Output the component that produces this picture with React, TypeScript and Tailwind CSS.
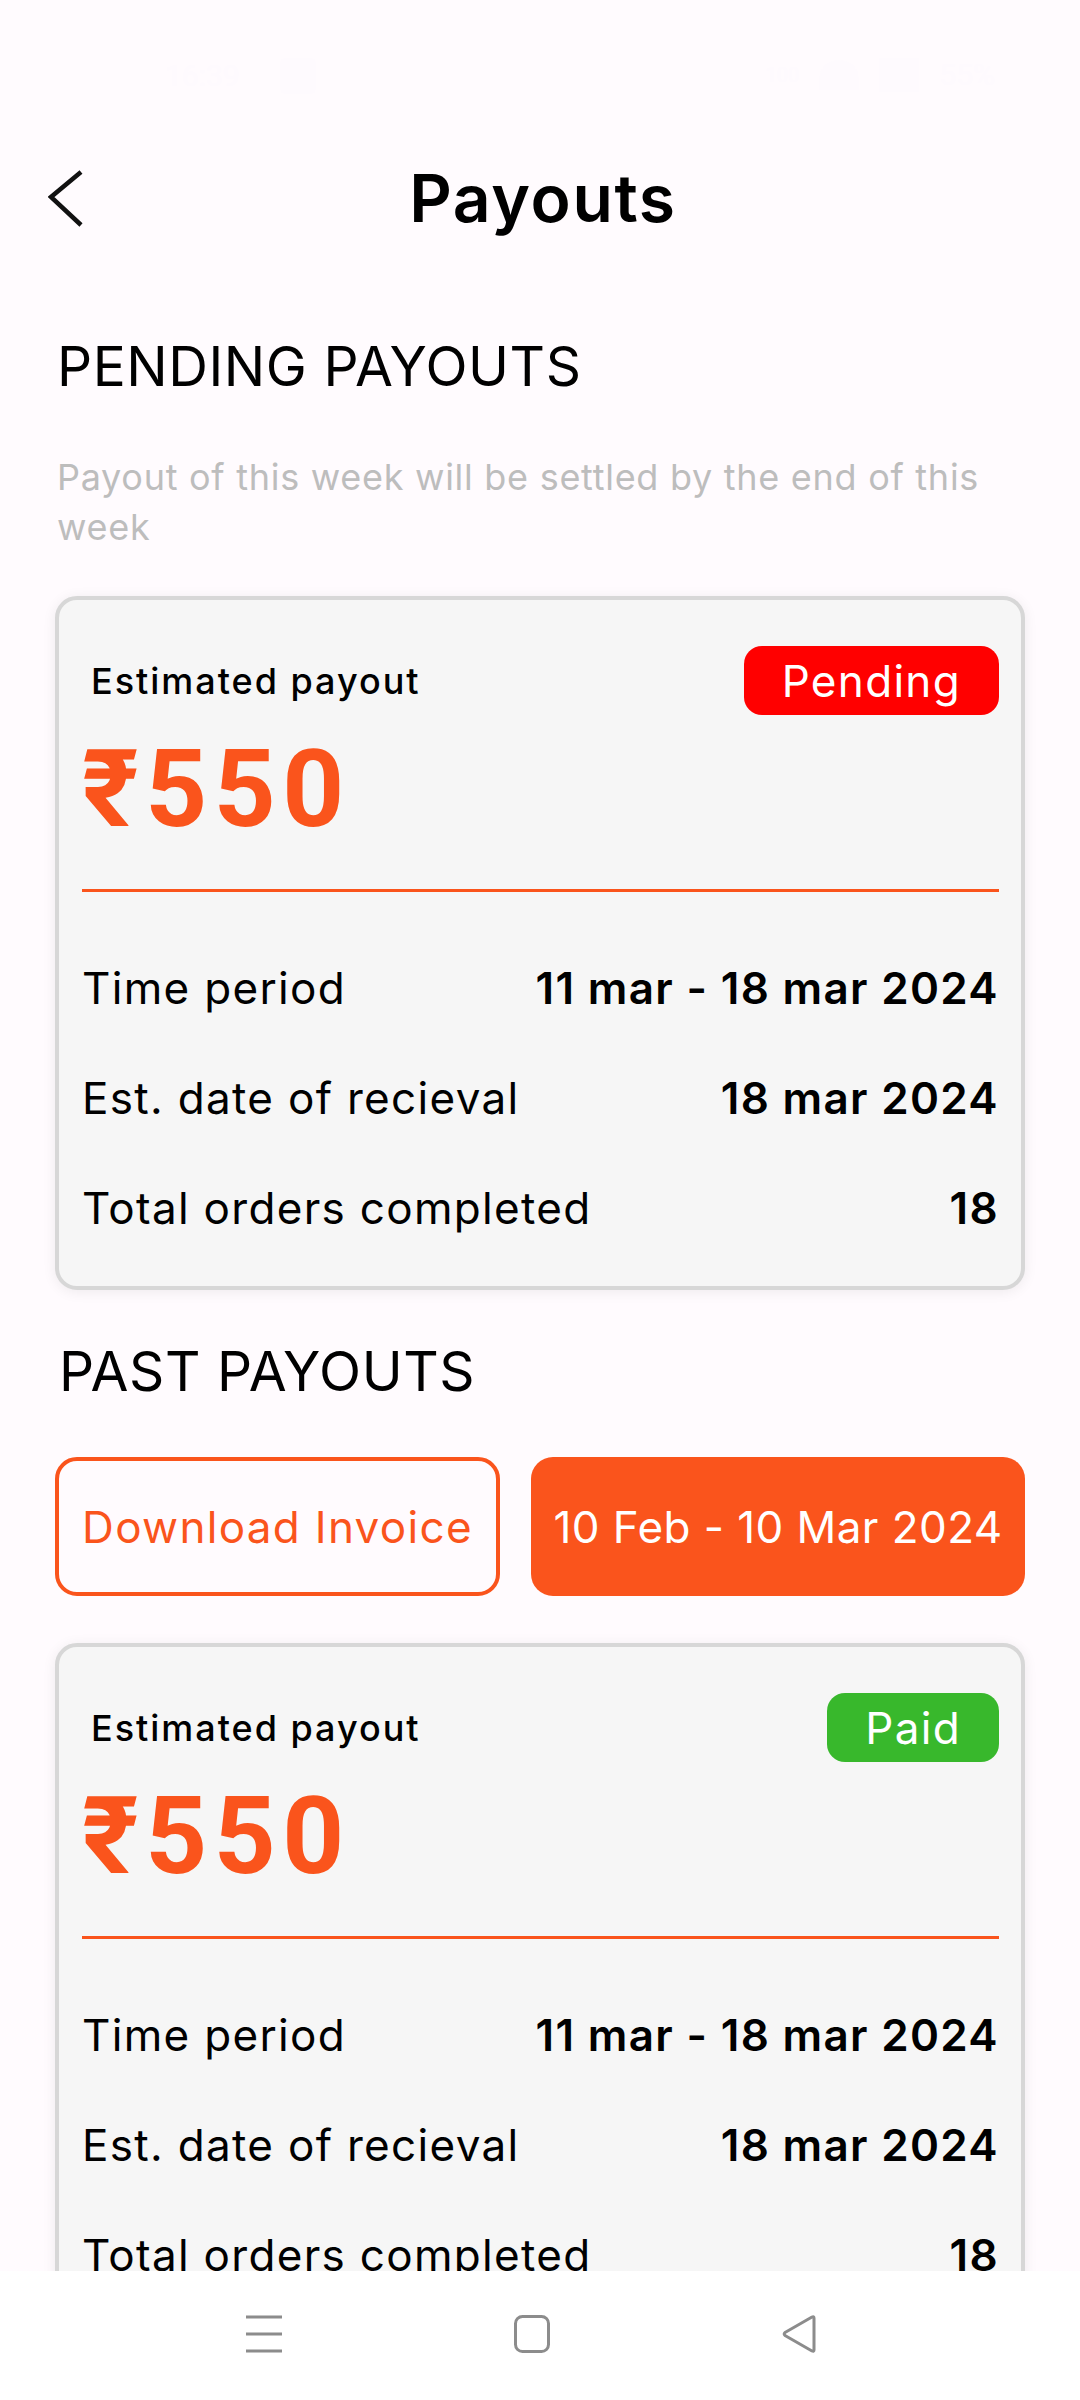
import React from 'react';

const ORANGE = '#fa541c';

type Payout = {
  status: 'Pending' | 'Paid';
  amount: string;
  period: string;
  receival: string;
  orders: string;
};

const pending: Payout = {
  status: 'Pending',
  amount: '₹550',
  period: '11 mar - 18 mar 2024',
  receival: '18 mar 2024',
  orders: '18',
};

const past: Payout = { ...pending, status: 'Paid' };

function BackIcon() {
  return (
    <svg width="40" height="60" viewBox="0 0 40 60" fill="none">
      <polyline points="33,3 3,28 33,56" stroke="#111" strokeWidth="4.5" strokeLinejoin="miter" />
    </svg>
  );
}

function StatusBar() {
  // status bar content is white on white in the capture, barely visible
  return (
    <div className="h-[130px] flex items-start pt-[58px] px-[165px] justify-between text-[#fefafe] font-['Roboto',sans-serif] text-[30px] leading-[34px]">
      <div className="flex items-center gap-[40px]">
        <span>16:39</span>
        <div className="w-[36px] h-[36px] rounded-[6px] bg-[#fefafe]" />
      </div>
      <div className="flex items-center gap-[20px] mr-[-80px]">
        <span className="text-[20px] leading-[20px]">100</span>
        <div className="w-[40px] h-[30px] rounded-t-full bg-[#fefafe]" />
        <div className="w-[40px] h-[34px] bg-[#fefafe]" />
        <span>55%</span>
      </div>
    </div>
  );
}

function Row({ label, value }: { label: string; value: string }) {
  return (
    <div className="h-[110px] flex items-center justify-between">
      <span className="text-[44px] leading-[54px] text-black font-normal tracking-[0.03em]">{label}</span>
      <span className="text-[44px] leading-[54px] text-black font-semibold tracking-[0.03em]">{value}</span>
    </div>
  );
}

function PayoutCard({ p }: { p: Payout }) {
  const badge = p.status === 'Pending' ? 'bg-[#ff0000]' : 'bg-[#38b82c]';
  return (
    <div className="border-4 border-[#d7d7d7] rounded-[22px] bg-[#f6f6f6] shadow-[0_2px_14px_rgba(0,0,0,0.07)] pt-[46px] pb-[23px] pl-[23px] pr-[22px] font-['Inter',sans-serif]">
      <div className="h-[69px] flex items-center justify-between">
        <span className="ml-[9px] text-[36px] leading-[44px] font-medium text-black tracking-[0.055em]">Estimated payout</span>
        <span
          className={`h-[69px] rounded-[18px] px-[38px] flex items-center text-white text-[44px] leading-[54px] tracking-[0.03em] ${badge}`}
        >
          {p.status}
        </span>
      </div>
      <div
        className="mt-[20px] h-[108px] text-[108px] leading-[108px] font-bold font-['Roboto',sans-serif] tracking-[0.06em]"
        style={{ color: ORANGE }}
      >
        {p.amount}
      </div>
      <div className="mt-[46px] h-[3px] bg-[#fa541c]" />
      <div className="mt-[41px]">
        <Row label="Time period" value={p.period} />
        <Row label="Est. date of recieval" value={p.receival} />
        <Row label="Total orders completed" value={p.orders} />
      </div>
    </div>
  );
}

function NavBar() {
  return (
    <div className="h-[129px] bg-white flex items-center pl-[245px] gap-[231px] pb-[4px] shrink-0">
      <svg width="38" height="38" viewBox="0 0 38 38" fill="none" stroke="#8c8c8c" strokeWidth="3">
        <line x1="1" y1="2" x2="37" y2="2" />
        <line x1="1" y1="19" x2="37" y2="19" />
        <line x1="1" y1="36" x2="37" y2="36" />
      </svg>
      <svg width="36" height="38" viewBox="0 0 36 38" fill="none" stroke="#8c8c8c" strokeWidth="3">
        <rect x="1.5" y="1.5" width="33" height="35" rx="7" />
      </svg>
      <svg width="38" height="38" viewBox="0 0 38 38" fill="none" stroke="#8c8c8c" strokeWidth="3" strokeLinejoin="round">
        <path d="M33 3 L33 35 Q33 37 31 36 L4 20.5 Q2.5 19 4 17.5 L31 2 Q33 1 33 3 Z" />
      </svg>
    </div>
  );
}

export default function App() {
  return (
    <div className="w-[1080px] h-[2400px] flex flex-col bg-[#fffbfe] overflow-hidden">
      <div className="flex-1 overflow-hidden">
        <StatusBar />
        <div className="relative h-[136px] flex items-center justify-center">
          <div className="absolute left-[48px] top-[39px]">
            <BackIcon />
          </div>
          <h1 className="ml-[6px] text-[66px] leading-[80px] font-semibold text-black font-['Inter',sans-serif] tracking-[0.025em]">
            Payouts
          </h1>
        </div>

        <div className="pl-[55px] pr-[55px] font-['Inter',sans-serif]">
          <h2 className="mt-[72px] ml-[2px] h-[56px] text-[55px] leading-[56px] font-normal text-black tracking-[0.01em]">
            PENDING PAYOUTS
          </h2>
          <p className="mt-[58px] ml-[2px] text-[36px] leading-[50px] text-[#bdbdbd] tracking-[0.02em]">
            Payout of this week will be settled by the end of this week
          </p>

          <div className="mt-[44px]">
            <PayoutCard p={pending} />
          </div>

          <h2 className="mt-[53px] ml-[4px] h-[56px] text-[55px] leading-[56px] font-normal text-black tracking-[0.01em]">
            PAST PAYOUTS
          </h2>

          <div className="mt-[58px] flex justify-between">
            <button className="w-[445px] h-[139px] rounded-[22px] border-4 border-[#fa541c] bg-[#fffbfe] text-[#fa541c] text-[44px] leading-[54px] tracking-[0.03em]">
              Download Invoice
            </button>
            <button className="w-[494px] h-[139px] rounded-[22px] bg-[#fa541c] text-white text-[44px] leading-[54px] tracking-[0.01em]">
              10 Feb - 10 Mar 2024
            </button>
          </div>

          <div className="mt-[47px]">
            <PayoutCard p={past} />
          </div>
        </div>
      </div>
      <NavBar />
    </div>
  );
}
